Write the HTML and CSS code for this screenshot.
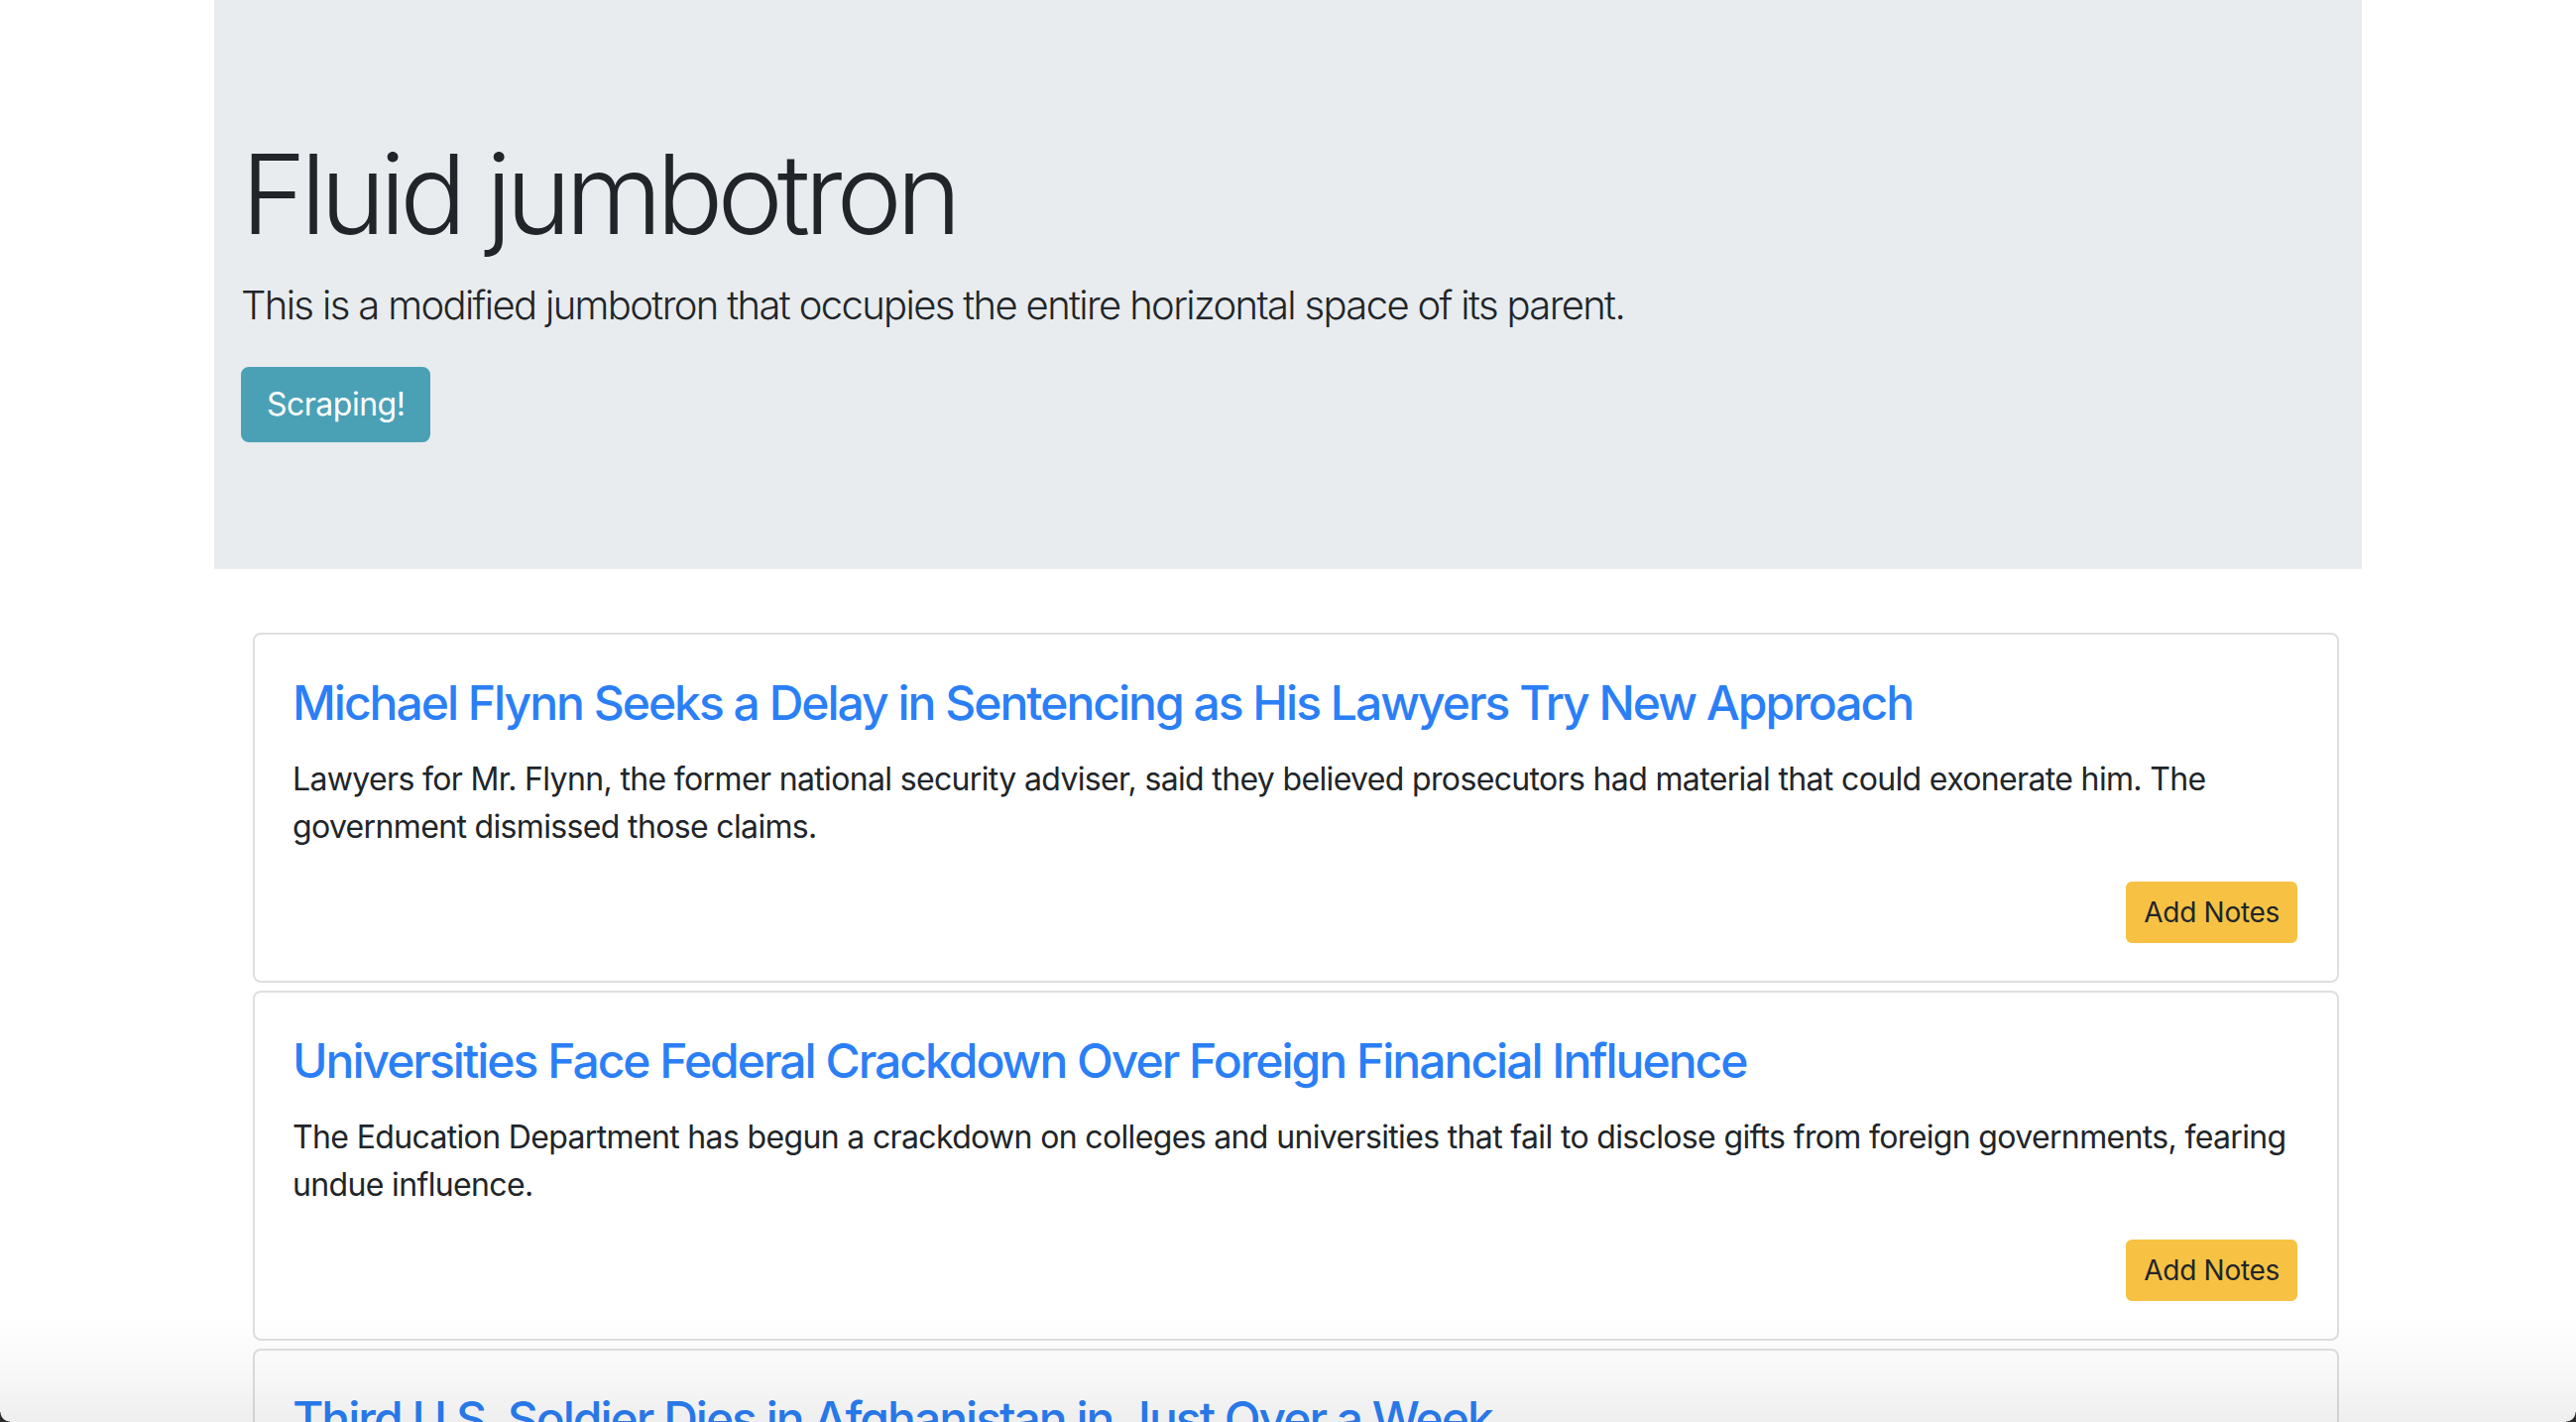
FILE: index.html
```html
<!DOCTYPE html>
<html lang="en">
<head>
<meta charset="utf-8">
<title>Scraper</title>
<link rel="stylesheet" href="styles.css">
</head>
<body>
<div class="page">
  <header class="jumbotron">
    <h1 class="display">Fluid jumbotron</h1>
    <p class="lead">This is a modified jumbotron that occupies the entire horizontal space of its parent.</p>
    <button class="btn btn-info">Scraping!</button>
  </header>
  <main class="articles">
    <article class="card">
      <h4 class="card-title">Michael Flynn Seeks a Delay in Sentencing as His Lawyers Try New Approach</h4>
      <p class="card-text">Lawyers for Mr. Flynn, the former national security adviser, said they believed prosecutors had material that could exonerate him. The<br>government dismissed those claims.</p>
      <div class="card-actions"><button class="btn btn-sm btn-warning">Add Notes</button></div>
    </article>
    <article class="card">
      <h4 class="card-title">Universities Face Federal Crackdown Over Foreign Financial Influence</h4>
      <p class="card-text">The Education Department has begun a crackdown on colleges and universities that fail to disclose gifts from foreign governments, fearing<br>undue influence.</p>
      <div class="card-actions"><button class="btn btn-sm btn-warning">Add Notes</button></div>
    </article>
    <article class="card">
      <h4 class="card-title">Third U.S. Soldier Dies in Afghanistan in Just Over a Week</h4>
      <p class="card-text">An American service member was killed in Afghanistan, the third in just over a week.</p>
      <div class="card-actions"><button class="btn btn-sm btn-warning">Add Notes</button></div>
    </article>
  </main>
</div>
<div class="window-shade"></div>
<div class="corner corner-left"></div>
<div class="corner corner-right"></div>
</body>
</html>
```

FILE: styles.css
```css
html, body {
  margin: 0;
  padding: 0;
  background: #ffffff;
}
body {
  font-family: Inter, "Noto Sans", "Liberation Sans", sans-serif;
  font-size: 32px;
  line-height: 1.5;
  color: #212529;
  height: 1434px;
  overflow: hidden;
}
.page {
  width: 2166px;
  margin: 0 auto;
}
.jumbotron {
  background: #e8ecef;
  padding: 128px 30px 128px 27px;
  margin-bottom: 64px;
}
.display {
  margin: 0 0 16px;
  font-size: 112px;
  font-weight: 300;
  line-height: 1.2;
  letter-spacing: -6px;
}
.lead {
  margin: 0 0 32px;
  font-size: 40px;
  font-weight: 300;
  line-height: 1.5;
  letter-spacing: -1.65px;
}
.btn {
  display: inline-block;
  font-family: inherit;
  font-size: 32px;
  line-height: 1.5;
  padding: 12px 24px;
  border: 2px solid transparent;
  border-radius: 8px;
  letter-spacing: -0.5px;
  cursor: pointer;
}
.btn-info {
  background: #4aa1b6;
  border-color: #4aa1b6;
  color: #ffffff;
}
.btn-sm {
  font-size: 28px;
  padding: 8px 16px;
  border-radius: 6px;
  letter-spacing: -0.3px;
}
.btn-warning {
  background: #f7c244;
  border-color: #f7c244;
  color: #212529;
}
.articles {
  margin: 0 23px 0 39px;
}
.card {
  border: 2px solid #dfdfdf;
  border-radius: 8px;
  padding: 40px 40px 38px 38px;
  margin-bottom: 8px;
  background: #ffffff;
}
.card-title {
  margin: 0 0 24px;
  font-size: 48px;
  font-weight: 500;
  line-height: 1.2;
  letter-spacing: -2px;
  color: #2b7ff6;
}
.card-text {
  margin: 0 0 31px;
  letter-spacing: -0.65px;
}
.card-actions {
  display: flex;
  justify-content: flex-end;
}
.window-shade {
  position: fixed;
  left: 0;
  right: 0;
  bottom: 0;
  height: 110px;
  pointer-events: none;
  background: linear-gradient(to bottom, rgba(0,0,0,0) 0%, rgba(0,0,0,0.025) 50%, rgba(0,0,0,0.065) 100%);
}
.corner {
  position: fixed;
  bottom: 0;
  width: 10px;
  height: 10px;
  pointer-events: none;
}
.corner-left {
  left: 0;
  background: radial-gradient(circle at 100% 0, transparent 9px, #2a2a2a 10px);
}
.corner-right {
  right: 0;
  background: radial-gradient(circle at 0 0, transparent 9px, #2a2a2a 10px);
}
```
